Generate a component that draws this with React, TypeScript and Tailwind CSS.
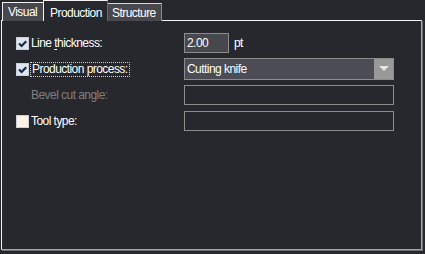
import React from "react";

const Check = () => (
  <svg width="11" height="11" viewBox="0 0 11 11" className="block">
    <path d="M2 5.5 L4.6 8 L9.2 3.2" fill="none" stroke="#15284a" strokeWidth="2.2" />
  </svg>
);

const CheckBox = ({ checked }: { checked: boolean }) => (
  <div
    className={`w-[13px] h-[13px] shrink-0 border border-[#c9d0da] ${
      checked ? "bg-[#dde5ef]" : "bg-[#fcf2e5]"
    }`}
  >
    {checked && <Check />}
  </div>
);

const App: React.FC = () => {
  return (
    <div
      className="w-[425px] h-[254px] bg-[#27282d] text-[12px] tracking-[-0.55px] text-white overflow-hidden"
      style={{ fontFamily: '"Liberation Sans", Arial, sans-serif' }}
    >
      {/* tabs */}
      <div className="flex items-end h-[21px] pl-[2px] relative z-10">
        <div className="w-[41px] h-[19px] pl-[5px] bg-[#47484e] border-l border-t border-[#f2f2f2] flex items-center leading-none">
          Visual
        </div>
        <div className="w-[65px] h-[21px] pl-[6px] bg-[#27282d] border-l border-t border-r border-l-[#f2f2f2] border-t-[#f2f2f2] border-r-[#6a6a6a] flex items-center pt-[3px] leading-none">
          Production
        </div>
        <div className="w-[54px] h-[18px] pl-[4px] bg-[#47484e] border-t border-r border-t-[#d8d8d8] border-r-[#8a8a8a] flex items-center leading-none">
          Structure
        </div>
      </div>

      {/* panel */}
      <div className="-mt-px ml-[1px] w-[421px] h-[230px] border-l border-t border-r border-b border-l-[#f2f2f2] border-t-[#f2f2f2] border-r-[#a8a8a8] border-b-[#a8a8a8] shadow-[1px_1px_0_#6e6e6e] pl-[14px] pt-[12px] flex flex-col">
        {/* row 1 */}
        <div className="flex items-center h-[20px]">
          <div className="w-[168px] flex items-center">
            <CheckBox checked />
            <span className="ml-[2px]">
              Line <span className="underline underline-offset-2">t</span>hickness:
            </span>
          </div>
          <div className="w-[45px] h-[20px] bg-[#47484e] border border-[#8c8c8c] flex items-center pl-[2px]">
            2.00
          </div>
          <span className="ml-[5px]">pt</span>
        </div>

        {/* row 2 */}
        <div className="flex items-center h-[22px] mt-[5px]">
          <div className="w-[168px] flex items-center">
            <CheckBox checked />
            <span className="ml-[1px] px-px border border-dotted border-[#d0d0d0] leading-[13px]">
              Production process:
            </span>
          </div>
          <div className="w-[210px] h-[22px] bg-[#4b4c54] border border-[#8c8c8c] flex items-center">
            <span className="flex-1 pl-[2px]">Cutting knife</span>
            <div className="w-[19px] h-full bg-[#999999] flex items-center justify-center">
              <svg width="10" height="6" viewBox="0 0 10 6">
                <path d="M0 0 H10 L5 5 Z" fill="#e6e6e6" />
              </svg>
            </div>
          </div>
        </div>

        {/* row 3 */}
        <div className="flex items-center h-[20px] mt-[5px]">
          <div className="w-[168px] pl-[15px] text-[#7f7f7f]">Bevel cut angle:</div>
          <div className="w-[210px] h-[20px] border border-[#8c8c8c]" />
        </div>

        {/* row 4 */}
        <div className="flex items-center h-[20px] mt-[6px]">
          <div className="w-[168px] flex items-center">
            <CheckBox checked={false} />
            <span className="ml-[2px]">Tool type:</span>
          </div>
          <div className="w-[210px] h-[20px] border border-[#8c8c8c]" />
        </div>
      </div>
    </div>
  );
};

export default App;
